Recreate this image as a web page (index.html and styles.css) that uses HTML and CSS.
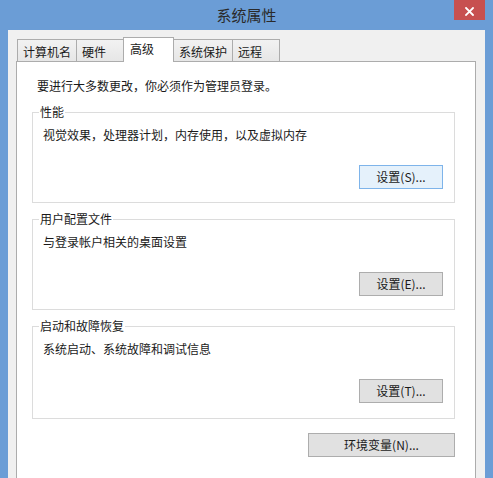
FILE: index.html
```html
<!DOCTYPE html>
<html lang="zh-CN">
<head>
  <meta charset="UTF-8" />
  <title>系统属性</title>
  <link rel="stylesheet" href="styles.css">
</head>
<body>
  <div class="window">
    <div class="titlebar">
      <span class="title">系统属性</span>
      <button class="close-btn" aria-label="关闭">
        <svg width="9" height="9" viewBox="0 0 9 9">
          <path d="M1 1 L8 8 M8 1 L1 8" stroke="#fff" stroke-width="1.8" stroke-linecap="square" />
        </svg>
      </button>
    </div>

    <div class="client">
      <div class="tabs">
        <div class="tab">计算机名</div>
        <div class="tab">硬件</div>
        <div class="tab active">高级</div>
        <div class="tab">系统保护</div>
        <div class="tab">远程</div>
      </div>

      <div class="tab-panel">
        <p class="intro">要进行大多数更改，你必须作为管理员登录。</p>

        <fieldset class="group">
          <legend>性能</legend>
          <p class="group-desc">视觉效果，处理器计划，内存使用，以及虚拟内存</p>
          <div class="group-actions">
            <button class="btn btn-default">设置(S)...</button>
          </div>
        </fieldset>

        <fieldset class="group">
          <legend>用户配置文件</legend>
          <p class="group-desc">与登录帐户相关的桌面设置</p>
          <div class="group-actions">
            <button class="btn">设置(E)...</button>
          </div>
        </fieldset>

        <fieldset class="group group-last">
          <legend>启动和故障恢复</legend>
          <p class="group-desc">系统启动、系统故障和调试信息</p>
          <div class="group-actions">
            <button class="btn">设置(T)...</button>
          </div>
        </fieldset>

        <div class="panel-actions">
          <button class="btn btn-wide">环境变量(N)...</button>
        </div>
      </div>
    </div>
  </div>
</body>
</html>
```

FILE: styles.css
```css
/* Reset */
* {
  margin: 0; padding: 0; box-sizing: border-box;
  font-family: "Noto Sans CJK SC", "Noto Sans", sans-serif;
}
body {
  background: #6b9dd6;
  color: #1a1a1a;
  height: 478px;
  overflow: hidden;
  font-size: 12px;
  line-height: 16px;
}
/* Window frame */
.window {
  height: 100vh;
  display: flex;
  flex-direction: column;
  padding: 0 8px;
}
.titlebar {
  height: 30px;
  position: relative;
  text-align: center;
}
.title {
  font-size: 15px;
  line-height: 30px;
  color: #2a2a2a;
}
.close-btn {
  position: absolute;
  top: 0;
  right: 0;
  width: 31px;
  height: 20px;
  border: none;
  background: #c75050;
  display: flex;
  align-items: center;
  justify-content: center;
  padding-top: 2px;
}
/* Client area */
.client {
  flex: 1;
  background: #f0f0f0;
  padding-top: 7px;
  display: flex;
  flex-direction: column;
}
/* Tabs */
.tabs {
  display: flex;
  align-items: flex-end;
  padding-left: 9px;
  height: 25px;
}
.tab {
  height: 22px;
  min-width: 48px;
  margin-bottom: 1px;
  padding: 4px 5px 1px;
  border: 1px solid #acacac;
  border-bottom: none;
  background: linear-gradient(#f2f2f2, #e6e6e6);
  margin-left: -1px;
}
.tab:first-child {
  margin-left: 0;
}
.tab.active {
  position: relative;
  height: 25px;
  min-width: 51px;
  margin-bottom: 0;
  padding: 3px 6px 5px;
  background: #fff;
}
/* Panel */
.tab-panel {
  flex: 1;
  margin: -1px 9px 0 8px;
  background: #fff;
  border: 1px solid #acacac;
  border-bottom: none;
  padding: 16px 20px 0 15px;
}
.intro {
  margin-left: 5px;
}
/* Group boxes */
.group {
  margin-top: 8px;
  border: 1px solid #dcdcdc;
  padding: 7px 11px 13px 6px;
}
.intro + .group {
  margin-top: 10px;
}
.group-last {
  padding-bottom: 15px;
}
.group legend {
  padding: 0 1px;
}
.group-desc {
  margin-left: 4px;
}
.group-actions {
  display: flex;
  justify-content: flex-end;
  margin-top: 22px;
}
/* Buttons */
.btn {
  width: 84px;
  height: 24px;
  border: 1px solid #adadad;
  background: #e1e1e1;
  color: #1a1a1a;
  font-size: 12px;
  line-height: 16px;
}
.btn-default {
  background: #e5f1fb;
  border-color: #7eb4ea;
}
.btn-wide {
  width: 147px;
}
.panel-actions {
  display: flex;
  justify-content: flex-end;
  margin-top: 14px;
}
```
